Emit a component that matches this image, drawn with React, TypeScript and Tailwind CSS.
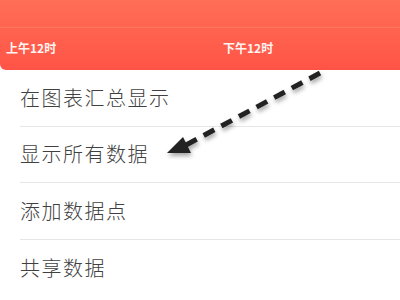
const rows = ["在图表汇总显示", "显示所有数据", "添加数据点", "共享数据"];

function Arrow() {
  return (
    <svg
      className="absolute left-0 top-0 pointer-events-none"
      width="400"
      height="300"
      viewBox="0 0 400 300"
    >
      <defs>
        <filter id="sh" x="-20%" y="-20%" width="140%" height="140%">
          <feDropShadow dx="1" dy="3" stdDeviation="2" floodColor="#000" floodOpacity="0.35" />
        </filter>
      </defs>
      <g filter="url(#sh)">
        <line
          x1="320"
          y1="73"
          x2="186"
          y2="145"
          stroke="#222"
          strokeWidth="5"
          strokeDasharray="12 8"
        />
        <polygon points="167,153 183,137 191,153" fill="#222" />
      </g>
    </svg>
  );
}

export default function App() {
  return (
    <div
      className="relative w-[400px] h-[300px] overflow-hidden bg-white"
      style={{ fontFamily: '"Noto Sans CJK SC", "Noto Sans", sans-serif' }}
    >
      <div className="h-[70px] rounded-bl-[6px] bg-gradient-to-b from-[#ff6e57] to-[#ff5346] flex flex-col">
        <div className="h-[28px] border-b border-[#ff765f]" />
        <div className="flex items-center h-[42px] pb-[2px] text-[#fff4f2] text-[12px] font-semibold">
          <span className="pl-[6px] w-[223px]">上午12时</span>
          <span>下午12时</span>
        </div>
      </div>
      <div className="flex flex-col pl-[20px]">
        {rows.map((r, i) => (
          <div
            key={r}
            className={
              "h-[56.5px] flex items-center text-[20px] font-light tracking-[1.5px] text-[#404040] " +
              (i < rows.length - 1 ? "border-b border-[#e6e6e6]" : "")
            }
          >
            {r}
          </div>
        ))}
      </div>
      <Arrow />
    </div>
  );
}
